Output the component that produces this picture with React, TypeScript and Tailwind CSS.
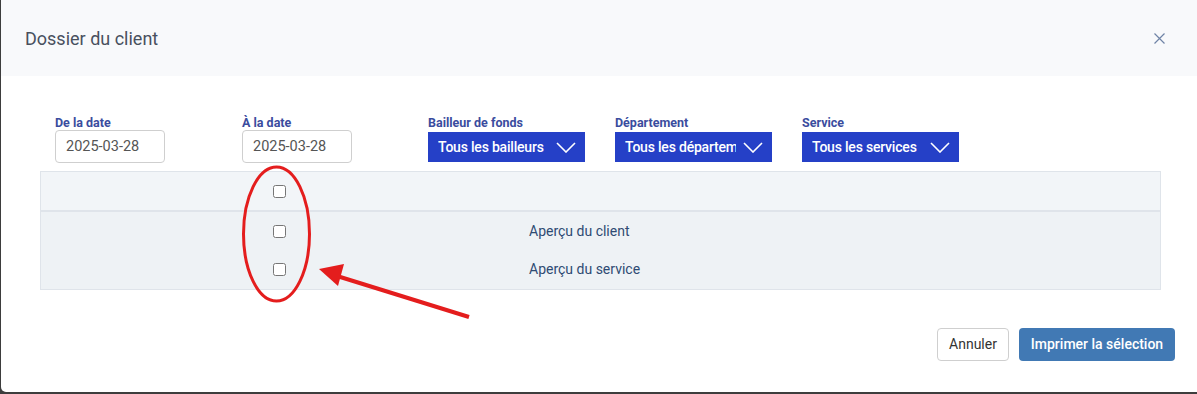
import React from 'react';

const Chevron: React.FC = () => (
  <svg width="20" height="11" viewBox="0 0 20 11" fill="none" stroke="currentColor" strokeWidth="1.6" className="shrink-0">
    <path d="M1 1l9 9 9-9" />
  </svg>
);

const Box: React.FC = () => (
  <input type="checkbox" className="w-[13px] h-[13px] m-0 accent-[#555]" />
);

const Filter: React.FC<{ label: string; value: string }> = ({ label, value }) => (
  <div className="flex flex-col w-[157px]">
    <span className="text-[12.5px] font-bold text-[#3a4c9e] leading-[14px] h-[16px]">{label}</span>
    <button className="h-[30px] bg-[#2540c7] text-white text-[14px] tracking-[-0.2px] font-medium flex items-center pl-[10px] pr-[9px] gap-[7px] overflow-hidden">
      <span className="flex-1 min-w-0 whitespace-nowrap overflow-hidden text-left">{value}</span>
      <Chevron />
    </button>
  </div>
);

const DateField: React.FC<{ label: string; value: string; w: string }> = ({ label, value, w }) => (
  <div className={`flex flex-col ${w}`}>
    <span className="text-[12.5px] font-bold text-[#3a4c9e] leading-[14px] h-[14px]">{label}</span>
    <div className="w-[110px] h-[33px] border border-[#cfcfcf] rounded-[4px] flex items-center pl-[10px] text-[14.5px] text-[#555]">
      {value}
    </div>
  </div>
);

export default function App() {
  return (
    <div className="w-[1197px] h-[394px] bg-[#3d3d3d] pl-[1px] pb-[2px] font-['Roboto',sans-serif]">
      <div className="relative h-full bg-white rounded-bl-[5px] flex flex-col overflow-hidden">
        <div className="h-[76px] bg-[#f8f9fb] flex items-center justify-between pl-[24px] pr-[32px]">
          <h1 className="text-[18px] text-[#48505e] pt-[1px]">Dossier du client</h1>
          <svg width="11" height="11" viewBox="0 0 11 11" stroke="#6f84a6" strokeWidth="1.2">
            <path d="M0.5 0.5l10 10M10.5 0.5l-10 10" />
          </svg>
        </div>

        <div className="pt-[40px] pl-[39px] pr-[36px]">
          <div className="flex items-start pl-[15px]">
            <DateField label="De la date" value="2025-03-28" w="w-[187px]" />
            <DateField label="À la date" value="2025-03-28" w="w-[186px]" />
            <div className="flex gap-[30px]">
              <Filter label="Bailleur de fonds" value="Tous les bailleurs" />
              <Filter label="Département" value="Tous les départements" />
              <Filter label="Service" value="Tous les services" />
            </div>
          </div>

          <div className="mt-[8px] border border-[#dfe4ea] text-[14px] text-[#2f4b73]">
            <div className="h-[40px] bg-[#f2f5f8] border-b-2 border-[#dfe4ea] grid grid-cols-[213px_50px_1fr] items-center">
              <div />
              <div className="flex justify-center"><Box /></div>
              <div />
            </div>
            <div className="bg-[#eef2f5] pb-[1px]">
              {['Aperçu du client', 'Aperçu du service'].map((t) => (
                <div key={t} className="h-[38px] grid grid-cols-[213px_50px_1fr] items-center">
                  <div />
                  <div className="flex justify-center"><Box /></div>
                  <div className="pl-[225px]">{t}</div>
                </div>
              ))}
            </div>
          </div>
        </div>

        <div className="flex justify-end gap-[10px] pr-[22px] mt-[38px]">
          <button className="w-[72px] h-[33px] border border-[#cfcfcf] rounded-[4px] bg-white text-[14px] text-[#333]">Annuler</button>
          <button className="w-[156px] h-[33px] rounded-[4px] bg-[#4179b4] text-white text-[14px] font-medium">Imprimer la sélection</button>
        </div>

        <svg className="absolute left-0 top-0 pointer-events-none" width="1196" height="392">
          <ellipse cx="275.5" cy="234" rx="33" ry="67" fill="none" stroke="#e41d1d" strokeWidth="3" />
          <line x1="336" y1="276" x2="468" y2="317" stroke="#e41d1d" strokeWidth="4" />
          <polygon points="318,269 343,264 337,286" fill="#e41d1d" />
        </svg>
      </div>
    </div>
  );
}
